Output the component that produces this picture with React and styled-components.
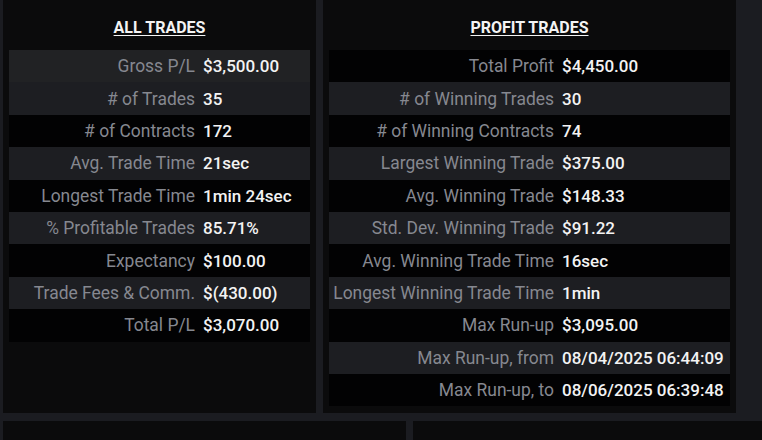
import React from "react";
import styled, { createGlobalStyle } from "styled-components";

const Global = createGlobalStyle`
  html, body { margin: 0; padding: 0; background: #1b1c21; }
  body { font-family: Roboto, "Liberation Sans", Arial, sans-serif; }
  * { box-sizing: border-box; }
`;

const Page = styled.div`
  width: 762px;
  height: 440px;
  overflow: hidden;
  background: #1b1c21;
  padding-left: 3px;
  display: grid;
  grid-template-rows: 413px 1fr;
  row-gap: 8px;
`;

const TopRow = styled.div`
  display: grid;
  grid-template-columns: 313px 413px;
  column-gap: 7px;
`;

const BottomRow = styled.div`
  display: grid;
  grid-template-columns: 403px 1fr;
  column-gap: 7px;
`;

const Panel = styled.section`
  background: #0b0b0c;
  padding: 0 6px;
  display: flex;
  flex-direction: column;
`;

const Title = styled.h2`
  margin: 0;
  height: 50px;
  padding-top: 4px;
  display: flex;
  align-items: center;
  justify-content: center;
  font-size: 16px;
  font-weight: 700;
  color: #f4f4f4;
  text-decoration: underline;
  text-underline-offset: 2px;
  text-decoration-thickness: 1px;
`;

const Table = styled.div`
  display: flex;
  flex-direction: column;
`;

const Row = styled.div`
  display: grid;
  grid-template-columns: ${(p) => p.$labelWidth}px 1fr;
  height: 32.4px;
  align-items: center;
  background: ${(p) =>
    p.$tone === "first" ? "#212224" : p.$tone === "gray" ? "#1d1e22" : "#020203"};
  line-height: 20px;
  white-space: nowrap;
`;

const Label = styled.span`
  text-align: right;
  padding-right: 4px;
  color: #868890;
  font-size: 17.45px;
  font-weight: 400;
`;

const Value = styled.span`
  padding-left: 4px;
  color: #f3f3f3;
  font-size: 17px;
  font-weight: 500;
`;

const allTrades = [
  ["Gross P/L", "$3,500.00"],
  ["# of Trades", "35"],
  ["# of Contracts", "172"],
  ["Avg. Trade Time", "21sec"],
  ["Longest Trade Time", "1min 24sec"],
  ["% Profitable Trades", "85.71%"],
  ["Expectancy", "$100.00"],
  ["Trade Fees & Comm.", "$(430.00)"],
  ["Total P/L", "$3,070.00"],
];

const profitTrades = [
  ["Total Profit", "$4,450.00"],
  ["# of Winning Trades", "30"],
  ["# of Winning Contracts", "74"],
  ["Largest Winning Trade", "$375.00"],
  ["Avg. Winning Trade", "$148.33"],
  ["Std. Dev. Winning Trade", "$91.22"],
  ["Avg. Winning Trade Time", "16sec"],
  ["Longest Winning Trade Time", "1min"],
  ["Max Run-up", "$3,095.00"],
  ["Max Run-up, from", "08/04/2025 06:44:09"],
  ["Max Run-up, to", "08/06/2025 06:39:48"],
];

function StatsPanel({ title, rows, labelWidth, toneFor }) {
  return (
    <Panel>
      <Title>{title}</Title>
      <Table>
        {rows.map(([l, v], i) => (
          <Row key={l} $labelWidth={labelWidth} $tone={toneFor(i)}>
            <Label>{l}</Label>
            <Value>{v}</Value>
          </Row>
        ))}
      </Table>
    </Panel>
  );
}

export default function App() {
  return (
    <>
      <Global />
      <Page>
        <TopRow>
          <StatsPanel
            title="ALL TRADES"
            rows={allTrades}
            labelWidth={190}
            toneFor={(i) => (i === 0 ? "first" : i % 2 === 1 ? "gray" : "black")}
          />
          <StatsPanel
            title="PROFIT TRADES"
            rows={profitTrades}
            labelWidth={229}
            toneFor={(i) => (i % 2 === 1 ? "gray" : "black")}
          />
        </TopRow>
        <BottomRow>
          <Panel />
          <Panel />
        </BottomRow>
      </Page>
    </>
  );
}
